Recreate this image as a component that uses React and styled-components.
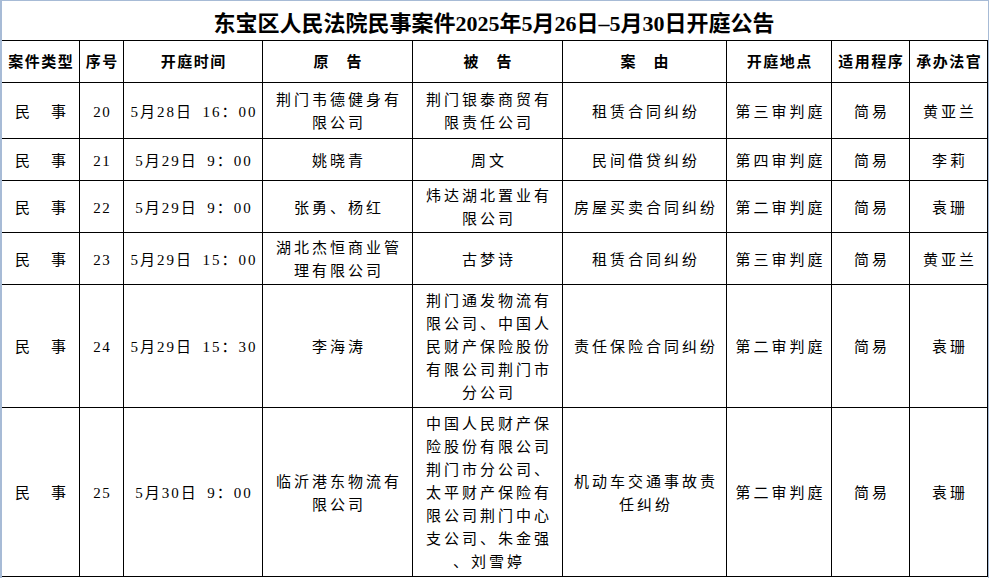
import React from "react";
import styled, { createGlobalStyle } from "styled-components";

const GlobalStyle = createGlobalStyle`
  html, body { margin: 0; padding: 0; background: #ffffff; }
  body {
    font-family: "Liberation Serif", "Noto Sans CJK SC", serif;
    color: #000000;
  }
  #root { width: 989px; height: 578px; }
`;

const COLS = "78px 44px 139px 150px 150px 164px 105px 78px 78px";

const Sheet = styled.div`
  width: 989px;
  height: 578px;
  box-sizing: border-box;
  border-left: 2px solid #a7bbd6;
  border-top: 1px solid #a7bbd6;
  border-right: 1px solid #a7bbd6;
  display: flex;
  flex-direction: column;
  overflow: hidden;
  background: #ffffff;
`;

const Title = styled.h1`
  margin: 0;
  height: 39px;
  display: flex;
  align-items: center;
  justify-content: center;
  padding-right: 2px;
  font-family: "Liberation Serif", "Noto Sans CJK SC", serif;
  font-size: 22px;
  font-weight: 700;
  letter-spacing: 0;
`;

const Row = styled.div`
  display: grid;
  grid-template-columns: ${COLS};
  height: ${(p) => p.$h}px;
  box-sizing: border-box;
  border-bottom: 1px solid #000000;
  border-top: ${(p) => (p.$top ? "1px solid #000000" : "none")};
`;

const Cell = styled.div`
  border-right: 1px solid #000000;
  display: flex;
  align-items: center;
  justify-content: center;
  text-align: center;
  font-size: 15px;
  line-height: 23px;
  letter-spacing: ${(p) => p.$ls ?? 3}px;
  padding-left: ${(p) => p.$ls ?? 3}px;
  padding-top: 3px;
  white-space: pre;
  overflow: hidden;
`;

const HeadCell = styled(Cell)`
  font-weight: 700;
  letter-spacing: 1.5px;
  padding-left: 1.5px;
  padding-top: 1px;
`;

const headers = [
  "案件类型",
  "序号",
  "开庭时间",
  "原\u3000告",
  "被\u3000告",
  "案\u3000由",
  "开庭地点",
  "适用程序",
  "承办法官",
];

const S = "\u2002";

const rows = [
  {
    h: 56,
    cells: [
      "民\u3000事",
      "20",
      `5月28日${S}16：00`,
      "荆门韦德健身有\n限公司",
      "荆门银泰商贸有\n限责任公司",
      "租赁合同纠纷",
      "第三审判庭",
      "简易",
      "黄亚兰",
    ],
  },
  {
    h: 42,
    cells: [
      "民\u3000事",
      "21",
      `5月29日${S}9：00`,
      "姚晓青",
      "周文",
      "民间借贷纠纷",
      "第四审判庭",
      "简易",
      "李莉",
    ],
  },
  {
    h: 52,
    cells: [
      "民\u3000事",
      "22",
      `5月29日${S}9：00`,
      "张勇、杨红",
      "炜达湖北置业有\n限公司",
      "房屋买卖合同纠纷",
      "第二审判庭",
      "简易",
      "袁珊",
    ],
  },
  {
    h: 52,
    cells: [
      "民\u3000事",
      "23",
      `5月29日${S}15：00`,
      "湖北杰恒商业管\n理有限公司",
      "古梦诗",
      "租赁合同纠纷",
      "第三审判庭",
      "简易",
      "黄亚兰",
    ],
  },
  {
    h: 123,
    cells: [
      "民\u3000事",
      "24",
      `5月29日${S}15：30`,
      "李海涛",
      "荆门通发物流有\n限公司、中国人\n民财产保险股份\n有限公司荆门市\n分公司",
      "责任保险合同纠纷",
      "第二审判庭",
      "简易",
      "袁珊",
    ],
  },
  {
    h: 169,
    cells: [
      "民\u3000事",
      "25",
      `5月30日${S}9：00`,
      "临沂港东物流有\n限公司",
      "中国人民财产保\n险股份有限公司\n荆门市分公司、\n太平财产保险有\n限公司荆门中心\n支公司、朱金强\n、刘雪婷",
      "机动车交通事故责\n任纠纷",
      "第二审判庭",
      "简易",
      "袁珊",
    ],
  },
];

const spacingFor = (ci) => (ci === 1 ? 1.5 : ci === 2 ? 2 : 3);

export default function App() {
  return (
    <>
      <GlobalStyle />
      <Sheet>
        <Title>东宝区人民法院民事案件2025年5月26日–5月30日开庭公告</Title>
        <Row $h={43} $top>
          {headers.map((h, i) => (
            <HeadCell key={i}>{h}</HeadCell>
          ))}
        </Row>
        {rows.map((r, ri) => (
          <Row key={ri} $h={r.h}>
            {r.cells.map((c, ci) => (
              <Cell key={ci} $ls={spacingFor(ci)}>
                {c}
              </Cell>
            ))}
          </Row>
        ))}
      </Sheet>
    </>
  );
}
